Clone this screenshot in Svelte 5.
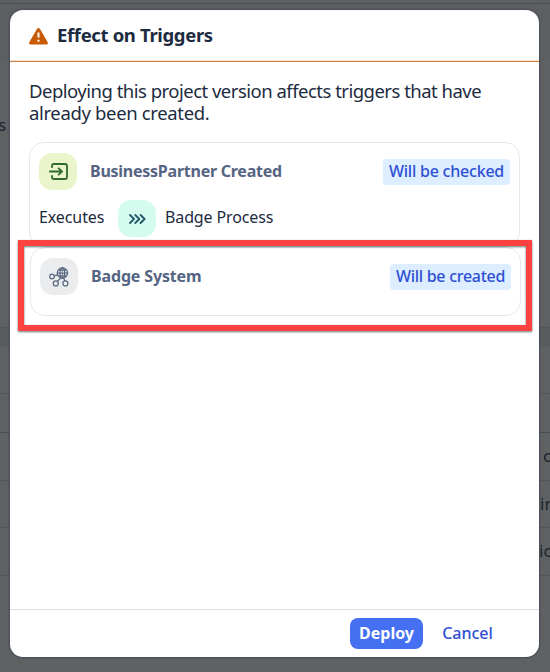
<script>
  const rows = [
    { top: 3, strong: true }, { top: 327 }, { top: 393 }, { top: 432, strong: true },
    { top: 480 }, { top: 527 }, { top: 575 }
  ];
</script>

<div class="screen">
  <div class="page" aria-hidden="true">
    <div class="band top"></div>
    <div class="band table"></div>
    {#each rows as row}
      <i class:strong={row.strong} style="top: {row.top}px"></i>
    {/each}
    <span class="left">s</span>
    <span class="r1">c</span>
    <span class="r2">in</span>
    <span class="r3">ic</span>
  </div>

  <div class="dialog" role="dialog" aria-labelledby="title">
    <header>
      <svg width="19" height="17" viewBox="0 0 19 17">
        <path d="M8.1.8Q9.5-.7 10.9.8L18.6 14Q19.4 16.5 17.2 16.5H1.8Q-.4 16.5.4 14Z" fill="#c95b04" />
        <path d="M9.5 4.6v5M9.5 11.8v2" stroke="#fff" stroke-width="2" />
      </svg>
      <h1 id="title">Effect on Triggers</h1>
    </header>

    <main>
      <p><span class="l1">Deploying this project version affects triggers that have</span><br /><span class="l2">already been created.</span></p>

      <section class="card first">
        <div class="row">
          <div class="tile green">
            <svg width="19" height="17" viewBox="0 0 19 17" fill="none" stroke="#32692f" stroke-width="1.8" stroke-linecap="round" stroke-linejoin="round">
              <path d="M3 4.2V3.1Q3 1 5.1 1H15.9Q18 1 18 3.1V13.9Q18 16 15.9 16H5.1Q3 16 3 13.9V12.8M.9 8.5H13M9.6 5.3 13.1 8.5 9.6 11.7" />
            </svg>
          </div>
          <h2 class="t1">BusinessPartner Created</h2>
          <span class="tag checked">Will be checked</span>
        </div>
        <div class="row second">
          <span class="exec">Executes</span>
          <div class="tile mint">
            <svg width="17" height="10" viewBox="0 0 17 10" fill="none" stroke="#22596a" stroke-width="1.8" stroke-linecap="round" stroke-linejoin="round">
              <path d="M1 1 5 5 1 9M6.3 1 10.3 5 6.3 9M11.6 1 15.6 5 11.6 9" />
            </svg>
          </div>
          <span class="proc">Badge Process</span>
        </div>
      </section>

      <section class="card last">
        <div class="row">
          <div class="tile gray">
            <svg width="20" height="20" viewBox="0 0 20 20" fill="none" stroke="#5b6882" stroke-width="1.25">
              <circle cx="13.4" cy="6" r="5.2" />
              <ellipse cx="13.4" cy="6" rx="2.3" ry="5.2" />
              <path d="M13.4.8v10.4" stroke-width=".7" />
              <path d="M8.2 6h10.4M9.2 3.2h8.4M9.2 8.8h8.4M5.4 8.9l3.2-1M11.8 11 8.4 14.2M14.7 11.1l1.2 3" />
              <circle cx="3" cy="9.5" r="2.3" />
              <circle cx="6.8" cy="16.4" r="2.5" />
              <circle cx="16.4" cy="16.4" r="2.5" />
            </svg>
          </div>
          <h2 class="t2">Badge System</h2>
          <span class="tag created">Will be created</span>
        </div>
      </section>
    </main>

    <footer>
      <button class="deploy">Deploy</button>
      <button class="cancel">Cancel</button>
    </footer>
  </div>

  <div class="marker"></div>
</div>

<style>
  :global(body) { margin: 0; }
  .screen {
    position: relative;
    width: 550px;
    height: 672px;
    overflow: hidden;
    background: #606163;
    color: #1d2b40;
    font-family: "Noto Sans", "Open Sans", sans-serif;
    white-space: nowrap;
  }
  .page { position: absolute; inset: 0; font-size: 17px; color: #1c232e; }
  .page i { position: absolute; left: 0; right: 0; height: 1px; background: #54565a; }
  .page i.strong { background: #484b50; }
  .page span { position: absolute; line-height: 20px; }
  .band { position: absolute; left: 0; right: 0; }
  .top { top: 0; height: 61px; background: #5e5f60; }
  .table { top: 328px; height: 18px; background: #595b5e; }
  .left { left: -2px; top: 115px; }
  .r1 { left: 543px; top: 446px; }
  .r2 { left: 540px; top: 494px; }
  .r3 { left: 539px; top: 541px; }

  .dialog {
    position: absolute;
    left: 10px;
    top: 10px;
    width: 529px;
    height: 647px;
    display: flex;
    flex-direction: column;
    border-radius: 13px;
    background: #fff;
    box-shadow: 0 0 2px 1px #454b58;
    overflow: hidden;
  }
  header {
    box-sizing: border-box;
    height: 52px;
    flex: none;
    display: flex;
    align-items: center;
    padding: 0 0 0 19px;
    border-bottom: 1px solid #ce813f;
    box-shadow: inset 0 -1px #f3e3d5;
  }
  header svg { margin-right: 9px; margin-top: 1px; }
  h1, h2, p { margin: 0; }
  h1 { font-size: 18.5px; line-height: 24px; font-weight: 700; letter-spacing: -0.35px; padding-bottom: 1px; }
  main { flex: 1; padding: 18px 18px 0 19px; }
  p { font-size: 18.5px; line-height: 21.5px; height: 62px; }
  .l1 { letter-spacing: -0.51px; }
  .l2 { letter-spacing: -0.35px; }
  .card {
    box-sizing: border-box;
    width: 491px;
    border: 1px solid #e7e8ea;
    border-radius: 15px;
    padding: 10px 9px 0;
    background: #fff;
  }
  .first { height: 105px; }
  .last { height: 69px; margin-left: 1px; }
  .row { display: flex; align-items: center; height: 37px; }
  .second { margin-top: 10px; }
  .tile {
    width: 38px;
    height: 37px;
    flex: none;
    display: flex;
    align-items: center;
    justify-content: center;
    border-radius: 13px;
  }
  .green { background: #ebf5cb; }
  .mint { background: #d5fbef; margin: 0 9px 0 14px; }
  .gray { background: #eaecee; }
  h2 { font-size: 16px; line-height: 22px; font-weight: 700; color: #556482; margin-left: 13px; padding-bottom: 1px; }
  .t1 { letter-spacing: -0.25px; }
  .t2 { letter-spacing: -0.15px; }
  .row > span { font-size: 16px; line-height: 22px; }
  .second > span { padding-bottom: 3px; }
  .exec { width: 65px; letter-spacing: -0.1px; }
  .proc { letter-spacing: -0.12px; }
  .row > .tag {
    box-sizing: border-box;
    height: 26px;
    margin-left: auto;
    border-radius: 4px;
    background: #dceeff;
    color: #2f50d5;
    font-weight: 500;
    line-height: 25px;
    text-align: center;
  }
  .checked { width: 127px; letter-spacing: -0.22px; }
  .created { width: 121px; letter-spacing: -0.28px; }
  footer {
    box-sizing: border-box;
    height: 48px;
    flex: none;
    display: flex;
    align-items: center;
    justify-content: flex-end;
    gap: 10px;
    padding-right: 37px;
    border-top: 1px solid #dfe0e1;
  }
  button { font: inherit; font-size: 16px; padding: 0; border: 0; height: 31px; line-height: 31px; border-radius: 8px; }
  .deploy { width: 73px; background: #4470f1; color: #fff; font-weight: 700; }
  .cancel { width: 69px; background: none; color: #2f50d5; font-weight: 500; }
  .marker {
    position: absolute;
    left: 18px;
    top: 240px;
    box-sizing: border-box;
    width: 514px;
    height: 91px;
    border: 6px solid #fc4141;
    filter: drop-shadow(0 1px 1px rgba(20, 50, 50, 0.65));
  }
</style>
